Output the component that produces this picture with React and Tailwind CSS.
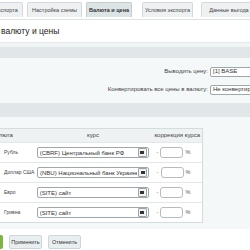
import React from "react";

function Arrow() {
  return (
    <span className="flex h-[9px] w-[9px] shrink-0 items-center justify-center rounded-[1px] border border-[#9aa3a6] bg-[#f0f2f3]">
      <span className="h-[3px] w-[4px] bg-[#333]" />
    </span>
  );
}

function RowSelect({ text }) {
  return (
    <div className="flex h-[11px] w-[112px] items-center justify-between gap-[1px] rounded-[2px] border border-[#9ea7aa] bg-white pl-[2px] pr-[1px]">
      <span className="overflow-hidden whitespace-nowrap text-[6px] leading-none text-[#333]">{text}</span>
      <Arrow />
    </div>
  );
}

function Row({ label, select }) {
  return (
    <div className="flex h-[20px] items-center border-t border-[#e2e7e9]">
      <div className="w-[63px] pl-[33px] text-[5px] text-[#444] whitespace-nowrap">{label}</div>
      <div className="w-[120px] pl-[3px]">
        <RowSelect text={select} />
      </div>
      <div className="flex w-[50px] items-center pl-[4px]">
        <span className="w-[4px] text-[5px] text-[#555]">-</span>
        <div className="h-[11px] w-[23px] rounded-[3px] border border-[#b5bcbf] bg-white" />
        <span className="pl-[2px] text-[5.5px] text-[#555]">%</span>
      </div>
    </div>
  );
}

function Tab({ children, active, className = "" }) {
  return (
    <div
      className={
        "flex h-[15px] shrink-0 items-center justify-center rounded-t-[2px] border border-b-0 px-[3px] text-[5.5px] whitespace-nowrap " +
        (active
          ? "border-[#c5ccd0] bg-[#dde4e6] font-bold text-[#333] "
          : "border-[#d3d9dc] bg-[#eef1f2] text-[#444] ") +
        className
      }
    >
      {children}
    </div>
  );
}

export default function App() {
  return (
    <div className="h-[250px] w-[250px] overflow-hidden bg-white font-['Liberation_Sans',Arial,sans-serif]">
      {/* tabs */}
      <div className="flex h-[20px] items-end gap-[4px] border-b border-[#dde3e5] pb-[2px]">
        <Tab className="-ml-[11px] w-[34px]">Экспорта</Tab>
        <Tab className="w-[55px]">Настройка схемы</Tab>
        <Tab active className="w-[46px]">Валюта и цена</Tab>
        <Tab className="ml-[6px] w-[51px]">Условия экспорта</Tab>
        <Tab className="ml-[4px] w-[56px]">Данные выгода</Tab>
      </div>
      {/* title */}
      <div className="flex h-[22px] items-center pl-[1px] text-[8.5px] text-[#222]">валюту и цены</div>
      <div className="h-[5px] border-t border-[#e3e8ea] bg-[#f1f4f5]" />
      <div className="h-[11px] bg-[#e1e7e9]" />
      {/* light area */}
      <div className="bg-[#f5f8f9]">
        <div className="flex flex-col gap-[7px] pt-[8px] pb-[8px]">
          <div className="flex h-[11px] items-center">
            <div className="w-[210px] shrink-0 pr-[2px] text-right text-[6px] text-[#444] whitespace-nowrap">Выводить цену:</div>
            <div className="flex h-[10px] w-[60px] shrink-0 items-center rounded-[2px] border border-[#9ea7aa] bg-white pl-[2px] text-[6px] text-[#333] whitespace-nowrap">[1] BASE</div>
          </div>
          <div className="flex h-[11px] items-center">
            <div className="w-[210px] shrink-0 pr-[2px] text-right text-[6px] text-[#444] whitespace-nowrap">Конвертировать все цены в валюту:</div>
            <div className="flex h-[10px] w-[60px] shrink-0 items-center overflow-hidden rounded-[2px] border border-[#9ea7aa] bg-white pl-[2px] text-[6px] text-[#333] whitespace-nowrap">Не конвертировать</div>
          </div>
        </div>
        <div className="h-[14px] bg-[#e1e7e9]" />
        <div className="pt-[11px] pb-[6px]">
          <div className="-ml-[30px] w-[233px] border border-[#d5dcdf] bg-white">
            <div className="flex h-[13px] items-center bg-[#eef2f3] text-[6px] text-[#444]">
              <div className="w-[63px] text-center">Валюта</div>
              <div className="w-[120px] text-center">курс</div>
              <div className="w-[50px] text-center whitespace-nowrap">коррекция курса</div>
            </div>
            <Row label="Рубль" select="(CBRF) Центральный банк РФ" />
            <Row label="Доллар США" select="(NBU) Национальный банк Украины" />
            <Row label="Евро" select="(SITE) сайт" />
            <Row label="Гривна" select="(SITE) сайт" />
          </div>
        </div>
      </div>
      {/* buttons */}
      <div className="flex items-center gap-[6px] pt-[6px]">
        <div className="-ml-[30px] h-[14px] w-[33px] rounded-[2px] bg-[#7bb73a]" />
        <div className="flex h-[14px] w-[33px] items-center justify-center rounded-[2px] border border-[#cfd6d8] bg-[#e9eef0] text-[5.5px] text-[#333]">Применить</div>
        <div className="flex h-[14px] w-[33px] items-center justify-center rounded-[2px] border border-[#cfd6d8] bg-[#e9eef0] text-[5.5px] text-[#333]">Отменить</div>
      </div>
    </div>
  );
}
